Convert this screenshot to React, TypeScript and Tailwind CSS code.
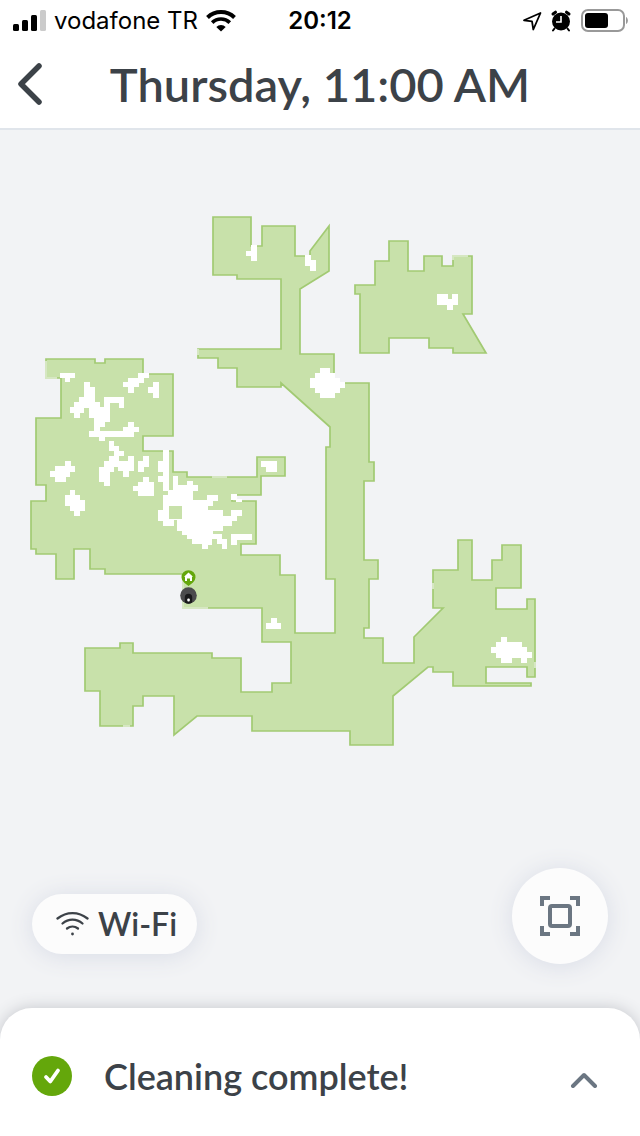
import { useState } from 'react'

// Cleaned floor area, one path per connected area
const AREAS = [
  'M213 217H251V246H262V226H295V256H310V251L329 226V271L300 289V354H334V383H369V462H374V481H364V560H378V579H369V628H364V638H383V663H414V637L443 608H433V570H458V540H472V580H492V560H502V545H521V588H496V609H527V599H535V677H527V667H486V683H531V686H453V672H433V667H428L393 696V745H350V731H252V716H197L174 735V696H143V706H133V726H100V691H85V648H120V643H133V653H212V658H241V692H272V683H291V642H262V608H183V574H105V569H90V549H74V579H56V554H36V549H31V501H46V485H36V418H61V378H46V359H95V363H105V359H143V374H173V436H143V451H173V472H187V477H257V457H285V476H261V495H232V501H256V544H241V555H280V575H295V633H335V579H326V447H330V427L281 383V387H237V368H218V358H198V349H281V279H237V275H213Z',
  'M355 285H375V261H389V241H408V271H424V256H442V266H453V256H472V314H463L486 353H453V348H429V338H389V353H360V294H355Z',
]

// Stretches of the outline that have no wall
const OPENINGS = 'M46 361V378H57M212 477H227M183 580V608H208M433 583V589M535 662V668M123 726H130M453 260V256H468M198 349V355'

// Spots the robot could not reach
const OBSTACLES = [
  'M60 373H75V378H70V382H65V378H60Z',
  'M84 382H90V387H95V402H100V407H104V397H124V408H119V403H110V422H105V427H100V431H123V427H128V422H134V427H139V432H134V437H105V441H99V437H89V431H94V418H89V408H84V413H80V418H74V413H70V407H74V402H79V397H84Z',
  'M138 373H149V378H144V383H139V387H134V393H128V387H123V382H128V378H138Z',
  'M153 382H159V398H153V393H148V387H153Z',
  'M65 461H71V466H75V472H70V477H66V482H55V477H50V471H55V466H65Z',
  'M70 490H75V495H80V500H85V511H80V516H74V511H70V506H65V495H70Z',
  'M109 441H114V446H119V451H124V456H119V461H128V456H134V471H129V477H123V471H118V467H114V472H110V486H104V482H99V467H104V461H109V456H114V451H109Z',
  'M143 456H149V467H144V472H138V461H143Z',
  'M143 477H149V482H154V496H138V491H133V486H138V482H143Z',
  'M163 450H169V490H173V476H178V485H187V481H193V485H198V491H193V500H207V495H218V501H213V506H208V510H223V516H231V510H242V516H237V521H232V526H223V531H213V534H222V539H227V549H222V544H217V539H212V545H208V549H202V544H192V539H187V535H182V531H177V520H174V526H163V521H158V510H163V495H168V491H163V482H158V476H163V472H158V461H163ZM169 506V519H182V506Z',
  'M231 534H252V540H237V545H231Z',
  'M231 494H237V499H242V502H236V500H231Z',
  'M261 461H277V472H266V467H261Z',
  'M251 245H257V261H251V256H246V251H251Z',
  'M305 255H311V260H316V271H310V266H305Z',
  'M320 368H330V373H335V378H340V382H345V388H340V393H335V398H320V393H315V388H310V378H315V373H320Z',
  'M437 294H448V299H452V294H458V305H453V310H447V305H437Z',
  'M501 637H507V642H522V647H527V652H532V658H527V663H521V658H512V663H501V658H496V653H491V647H496V642H501Z',
  'M271 618H277V623H281V629H266V623H271Z',
]

function StatusBar() {
  return (
    <div className="flex h-10 items-center justify-between px-3 pt-px font-['Inter',sans-serif] text-2xl text-black">
      <div className="flex flex-1 items-center gap-2">
        <svg width="34" height="22" viewBox="0 0 34 22" aria-hidden="true">
          <rect x="1" y="14" width="6" height="7" rx="1.5" />
          <rect x="10" y="10" width="6" height="11" rx="1.5" />
          <rect x="19" y="5" width="6" height="16" rx="1.5" />
          <rect x="28" y="0" width="6" height="21" rx="1.5" fill="#cbcbcb" />
        </svg>
        <span className="whitespace-nowrap">vodafone TR</span>
        <svg width="30" height="22" viewBox="0 0 30 22" fill="none" stroke="black" aria-hidden="true">
          <path d="M1.5 7.5A19.5 19.5 0 0 1 28.5 7.5" strokeWidth="4" />
          <path d="M6.2 12.6A12.5 12.5 0 0 1 23.8 12.6" strokeWidth="3.6" />
          <path d="M15 21.5L10.3 16.9A6.8 6.8 0 0 1 19.7 16.9Z" fill="black" stroke="none" />
        </svg>
      </div>
      <span className="font-semibold">20:12</span>
      <div className="flex flex-1 items-center justify-end gap-2">
        <svg width="20" height="20" viewBox="0 0 20 20" fill="none" stroke="black" strokeWidth="1.8" strokeLinejoin="round" aria-hidden="true">
          <path d="M18.5 2L2 9.3L10 10.3L11.3 18.5Z" />
        </svg>
        <svg width="22" height="22" viewBox="0 0 22 22" fill="none" stroke="black" aria-hidden="true">
          <circle cx="11" cy="11.5" r="9" fill="black" stroke="none" />
          <path d="M3 4L5.5 2.2M19 4L16.5 2.2" strokeWidth="3" strokeLinecap="round" />
          <path d="M4.5 18.5L3 20.5M17.5 18.5L19 20.5" strokeWidth="2" strokeLinecap="round" />
          <path d="M11 6V12H6" stroke="white" strokeWidth="1.6" />
        </svg>
        <svg width="48" height="24" viewBox="0 0 48 24" aria-hidden="true">
          <rect x="2" y="1" width="42" height="21" rx="6" fill="none" stroke="#999" strokeWidth="2" />
          <rect x="5" y="4" width="23" height="15" rx="3" />
          <path d="M46 8C48.5 9 48.5 14 46 15Z" fill="#999" />
        </svg>
      </div>
    </div>
  )
}

function FloorMap() {
  return (
    <svg viewBox="0 130 640 738" className="block h-auto w-full" role="img" aria-label="Cleaning map">
      {AREAS.map(d => <path key={d} d={d} fill="#c8e1aa" stroke="#a2ca73" strokeWidth="1.7" />)}
      <path d={OPENINGS} fill="none" stroke="#d6e7c2" strokeWidth="2" />
      {OBSTACLES.map(d => <path key={d} d={d} fill="white" fillRule="evenodd" />)}

      {/* Charging dock */}
      <path d="M188.5 586L184 582.5A7 7 0 1 1 193 582.5Z" fill="#64a70b" />
      <path d="M188.5 572.5L193 576.7H192V581H190V578.5H187V581H185V576.7H184Z" fill="white" />

      {/* Robot */}
      <circle cx="188.5" cy="595.5" r="8.3" fill="#4b4b4d" />
      <path d="M184.8 602.5V597.5A3.7 3.7 0 0 1 192.2 597.5V602.5Q188.5 605 184.8 602.5Z" fill="#19191b" />
      <rect x="187.3" y="598.5" width="2.5" height="3" rx="1" fill="white" />
    </svg>
  )
}

export default function App() {
  const [showWifi, setShowWifi] = useState(false)
  const [open, setOpen] = useState(false)

  return (
    <div className="flex min-h-screen flex-col bg-[#f2f3f5] font-['Lato',sans-serif] text-[#3c4248]">
      <header className="border-b-2 border-[#e0e5eb] bg-white">
        <StatusBar />
        <div className="grid h-22 grid-cols-[64px_1fr_64px] items-center">
          <button aria-label="Back" className="flex h-full items-center pl-4">
            <svg width="28" height="44" viewBox="0 0 28 44" fill="none" stroke="currentColor" strokeWidth="5.5" strokeLinecap="round" strokeLinejoin="round" aria-hidden="true">
              <path d="M23 4L5 22L23 40" />
            </svg>
          </button>
          <h1 className="whitespace-nowrap text-center text-[47px] leading-none font-semibold">Thursday, 11:00 AM</h1>
        </div>
      </header>

      <main className="flex-1">
        <FloorMap />
        <div className="flex items-end justify-between px-8">
          <button
            onClick={() => setShowWifi(!showWifi)}
            aria-pressed={showWifi}
            className="mb-2.5 flex h-15 items-center gap-2 rounded-full bg-[#fcfcfc] pr-5 pl-6 text-[32px] leading-none font-semibold shadow-[0_2px_24px_#d8dce6]"
          >
            <svg width="34" height="26" viewBox="0 0 34 26" fill="none" stroke="currentColor" strokeWidth="2.3" strokeLinecap="round" aria-hidden="true">
              <path d="M1.5 7.5C10.5 .2 22.5 .2 31.5 7.5" />
              <path d="M6.5 12.5C12.5 7.3 20.5 7.3 26.5 12.5" />
              <path d="M11 17.5C14.3 14.9 18.7 14.9 22 17.5" />
              <circle cx="16.5" cy="23" r="1.4" fill="currentColor" stroke="none" />
            </svg>
            Wi-Fi
          </button>
          <button aria-label="Fit map" className="flex size-24 items-center justify-center rounded-full bg-[#fcfcfc] text-[#6b7682] shadow-[0_2px_24px_#d8dce6]">
            <svg width="40" height="40" viewBox="0 0 40 40" fill="none" stroke="currentColor" strokeWidth="4" aria-hidden="true">
              <path d="M2 10V2H10M30 2H38V10M38 30V38H30M10 38H2V30" />
              <rect x="10" y="10" width="20" height="20" rx="2" />
            </svg>
          </button>
        </div>
      </main>

      <section className="mt-11 rounded-t-[32px] bg-white shadow-[0_0_16px_#c4c6cb]">
        <button
          onClick={() => setOpen(!open)}
          aria-expanded={open}
          className="flex h-32 w-full items-center gap-8 px-8 pt-2 text-left"
        >
          <svg width="40" height="40" viewBox="0 0 40 40" aria-hidden="true">
            <circle cx="20" cy="20" r="20" fill="#64a70b" />
            <path d="M14 21L18.3 25.5L26 14.5" fill="none" stroke="white" strokeWidth="3.8" strokeLinecap="round" strokeLinejoin="round" />
          </svg>
          <span className="flex-1 text-[36px] leading-10 font-semibold">Cleaning complete!</span>
          <svg width="48" height="24" viewBox="0 0 48 24" fill="none" stroke="#6b7682" strokeWidth="4" strokeLinecap="round" strokeLinejoin="round" aria-hidden="true">
            <path d="M13 22L24 11L35 22" />
          </svg>
        </button>
      </section>
    </div>
  )
}
